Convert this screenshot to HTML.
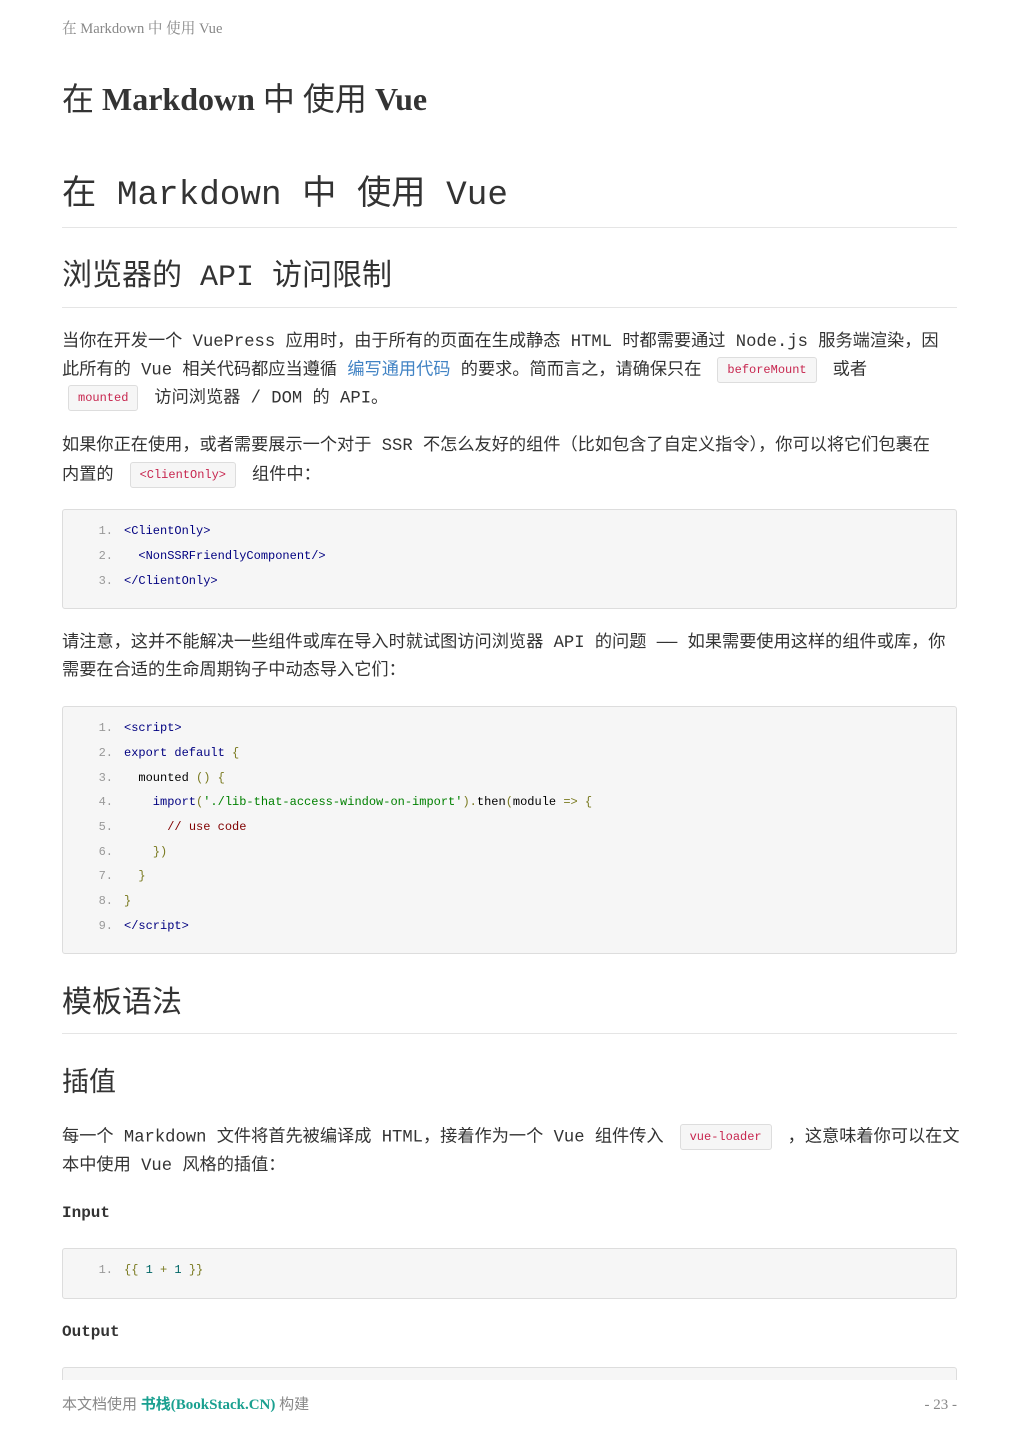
<!DOCTYPE html>
<html><head><meta charset="utf-8">
<style>
body{margin:0;background:#fff;width:1019px;height:1440px;position:relative;overflow:hidden;color:#333;font-family:"Liberation Mono","Noto Sans CJK SC",monospace;}
.a{position:absolute;left:62px;white-space:nowrap;}
.p{font-size:17.2px;line-height:28px;height:28px;}
.c{display:inline-block;background:#f6f6f6;border:1px solid #ddd;border-radius:3px;color:#c7254e;font-size:12px;line-height:24px;padding:0 9px;margin:0 16px;vertical-align:middle;}
.hr{position:absolute;left:62px;width:895px;height:1px;background:#e5e5e5;}
.pre{position:absolute;left:62px;width:893px;background:#f6f6f6;border:1px solid #ddd;border-radius:3px;}
.ln{position:absolute;left:0;font-size:12px;line-height:25px;white-space:pre;color:#000080;}
.ln i{font-style:normal;color:#999;display:inline-block;width:50px;text-align:right;margin-right:11px;}
.o{color:#7a7a20}.s{color:#008000}.k{color:#000080}.m{color:#800000}.n{color:#000}.num{color:#006666}
a{color:#4183c4;text-decoration:none}
</style></head><body>
<div class="a" style="top:17px;font:14.6px 'Liberation Serif','Noto Serif CJK SC',serif;color:#888;">在 Markdown 中 使用 Vue</div>
<div class="a" style="top:78px;font:32px/42px 'Liberation Serif','Noto Sans CJK SC',serif;color:#333;">在 <b>Markdown</b> 中 使用 <b>Vue</b></div>
<div class="a" style="top:173px;font-size:34.3px;line-height:46px;">在 Markdown 中 使用 Vue</div>
<div class="hr" style="top:227px"></div>
<div class="a" style="top:257px;font-size:30px;line-height:42px;">浏览器的 API 访问限制</div>
<div class="hr" style="top:307px"></div>

<div class="a p" style="top:329px">当你在开发一个 VuePress 应用时，由于所有的页面在生成静态 HTML 时都需要通过 Node.js 服务端渲染，因</div>
<div class="a p" style="top:357px">此所有的 Vue 相关代码都应当遵循 <a>编写通用代码</a> 的要求。简而言之，请确保只在<span class="c">beforeMount</span>或者</div>
<div class="a p" style="top:385px;left:52px"><span class="c">mounted</span>访问浏览器 / DOM 的 API。</div>

<div class="a p" style="top:433px">如果你正在使用，或者需要展示一个对于 SSR 不怎么友好的组件（比如包含了自定义指令），你可以将它们包裹在</div>
<div class="a p" style="top:462px">内置的<span class="c">&lt;ClientOnly&gt;</span>组件中：</div>

<div class="pre" style="top:509px;height:98px">
<div class="ln" style="top:9px"><i>1.</i>&lt;ClientOnly&gt;</div>
<div class="ln" style="top:34px"><i>2.</i>  &lt;NonSSRFriendlyComponent/&gt;</div>
<div class="ln" style="top:59px"><i>3.</i>&lt;/ClientOnly&gt;</div>
</div>

<div class="a p" style="top:630px">请注意，这并不能解决一些组件或库在导入时就试图访问浏览器 API 的问题 —— 如果需要使用这样的组件或库，你</div>
<div class="a p" style="top:658px">需要在合适的生命周期钩子中动态导入它们：</div>

<div class="pre" style="top:706px;height:246px">
<div class="ln" style="top:9px"><i>1.</i>&lt;script&gt;</div>
<div class="ln" style="top:34px"><i>2.</i>export default <span class="o">{</span></div>
<div class="ln" style="top:59px"><i>3.</i>  <span class="n">mounted</span> <span class="o">() {</span></div>
<div class="ln" style="top:83px"><i>4.</i>    import<span class="o">(</span><span class="s">'./lib-that-access-window-on-import'</span><span class="o">).</span><span class="n">then</span><span class="o">(</span><span class="n">module</span> <span class="o">=&gt; {</span></div>
<div class="ln" style="top:108px"><i>5.</i>      <span class="m">// use code</span></div>
<div class="ln" style="top:133px"><i>6.</i>    <span class="o">})</span></div>
<div class="ln" style="top:157px"><i>7.</i>  <span class="o">}</span></div>
<div class="ln" style="top:182px"><i>8.</i><span class="o">}</span></div>
<div class="ln" style="top:207px"><i>9.</i>&lt;/script&gt;</div>
</div>

<div class="a" style="top:984px;font-size:30px;line-height:42px;">模板语法</div>
<div class="hr" style="top:1033px"></div>
<div class="a" style="top:1066px;font-size:27px;line-height:38px;">插值</div>

<div class="a p" style="top:1124px">每一个 Markdown 文件将首先被编译成 HTML，接着作为一个 Vue 组件传入<span class="c">vue-loader</span>，这意味着你可以在文</div>
<div class="a p" style="top:1153px">本中使用 Vue 风格的插值：</div>

<div class="a" style="top:1202px;font-size:16px;line-height:22px;font-weight:bold;">Input</div>
<div class="pre" style="top:1248px;height:49px">
<div class="ln" style="top:9px"><i>1.</i><span class="o">{{</span> <span class="num">1</span> <span class="o">+</span> <span class="num">1</span> <span class="o">}}</span></div>
</div>
<div class="a" style="top:1321px;font-size:16px;line-height:22px;font-weight:bold;">Output</div>
<div class="pre" style="top:1367px;height:60px"></div>
<div style="position:absolute;left:0;top:1380px;width:1019px;height:60px;background:#fff"></div>
<div class="a" style="top:1396px;font:15px/18px 'Liberation Serif','Noto Sans CJK SC',serif;color:#888;">本文档使用 <span style="color:#1aa090;font-weight:bold">书栈(BookStack.CN)</span> 构建</div>
<div style="position:absolute;right:62px;top:1396px;font:15px/18px 'Liberation Serif',serif;color:#888;">- 23 -</div>
</body></html>
